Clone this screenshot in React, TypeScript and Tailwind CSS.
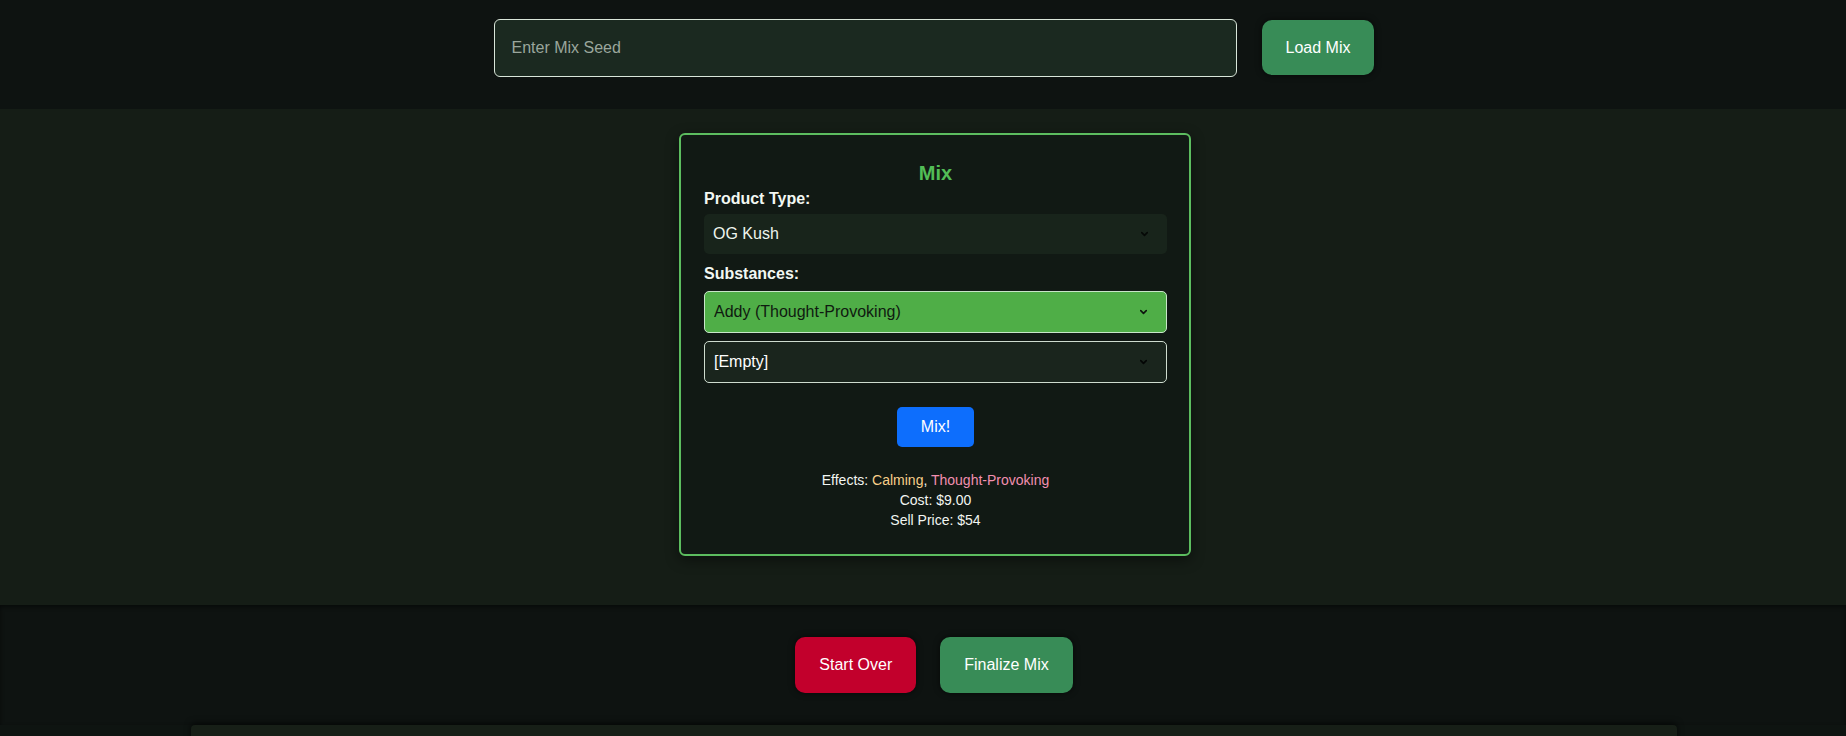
import { ChevronDown } from "lucide-react";

const font = { fontFamily: '"Liberation Sans", Arial, sans-serif' };

type SelectProps = {
  value: string;
  className: string;
  chevron: string;
};

const FakeSelect: React.FC<SelectProps> = ({ value, className, chevron }) => {
  return (
    <div className={`relative flex items-center rounded-[5px] ${className}`}>
      <select
        defaultValue={value}
        className="w-full h-full appearance-none bg-transparent pl-[9px] pr-8 text-[16px] outline-none"
      >
        <option value={value}>{value}</option>
      </select>
      <ChevronDown
        className={`pointer-events-none absolute right-[17px] top-1/2 -translate-y-1/2 h-[11px] w-[11px] ${chevron}`}
        strokeWidth={3.5}
      />
    </div>
  );
};

export default function App() {
  return (
    <div className="min-h-[736px] bg-[#0e1411] text-white" style={font}>
      {/* seed bar */}
      <div className="h-[109px] pt-[19px] pl-[22px] flex justify-center items-start bg-[#0e1311]">
        <div className="flex items-start gap-[25px]">
          <input
            placeholder="Enter Mix Seed"
            className="w-[743px] h-[58px] rounded-[6px] border border-[#d9e6da] bg-[#1b2920] px-[17px] text-[16px] text-white placeholder:text-[#9aa69c] outline-none"
          />
          <button className="mt-px h-[55px] px-6 rounded-[10px] bg-[#388c57] text-[16px] text-white shadow-[0_0_6px_rgba(0,0,0,0.6)]">
            Load Mix
          </button>
        </div>
      </div>

      {/* mixer */}
      <div className="h-[496px] bg-[#151d16] pt-[24px] pl-[24px] flex justify-center items-start">
        <div className="w-[512px] rounded-[6px] border-2 border-[#5cbd5f] bg-[#111914] pl-[23px] pr-[22px] pt-[27px] pb-[24px] shadow-[0_4px_14px_rgba(0,0,0,0.45)]">
          <h3 className="text-center text-[20px] leading-[23px] font-bold text-[#52bd56]">
            Mix
          </h3>
          <div className="mt-[5px] text-[16px] leading-[18px] font-bold text-[#f2f7f2]">
            Product Type:
          </div>
          <FakeSelect
            value="OG Kush"
            className="mt-[6px] h-[40px] bg-[#18241b] text-[#eef5ee]"
            chevron="text-[#050806]"
          />
          <div className="mt-[11px] text-[16px] leading-[18px] font-bold text-[#f2f7f2]">
            Substances:
          </div>
          <div className="mt-[8px] flex flex-col gap-[8px]">
            <FakeSelect
              value="Addy (Thought-Provoking)"
              className="h-[42px] border border-[#c8e6c9] bg-[#4fae47] text-[#0f1a10]"
              chevron="text-[#0d140e]"
            />
            <FakeSelect
              value="[Empty]"
              className="h-[42px] border border-[#cfdccf] bg-[#1a251d] text-white"
              chevron="text-[#030504]"
            />
          </div>
          <div className="mt-[24px] flex justify-center">
            <button className="h-[40px] w-[77px] rounded-[5px] bg-[#0d6efd] text-[16px] text-white">
              Mix!
            </button>
          </div>
          <div className="mt-[23px] text-center text-[14px] leading-[20px] text-[#f1f5f1]">
            <div>
              Effects: <span className="text-[#f8cf8a]">Calming</span>,{" "}
              <span className="text-[#f28fb0]">Thought-Provoking</span>
            </div>
            <div>Cost: $9.00</div>
            <div>Sell Price: $54</div>
          </div>
        </div>
      </div>

      {/* actions */}
      <div className="h-[120px] pl-[22px] flex justify-center items-center gap-[24px] bg-[#0e1311] shadow-[inset_0_2px_4px_rgba(0,0,0,0.5)]">
        <button className="h-[56px] px-6 rounded-[10px] bg-[#c2002c] text-[16px] text-white shadow-[0_0_6px_rgba(0,0,0,0.6)]">
          Start Over
        </button>
        <button className="h-[56px] px-6 rounded-[10px] bg-[#388c57] text-[16px] text-white shadow-[0_0_6px_rgba(0,0,0,0.6)]">
          Finalize Mix
        </button>
      </div>

      {/* next section, cut off */}
      <div className="pl-[22px] flex justify-center">
        <div className="w-[1486px] h-[40px] rounded-t-[4px] bg-[#171f17] shadow-[0_-2px_6px_rgba(0,0,0,0.6)]" />
      </div>
    </div>
  );
}
